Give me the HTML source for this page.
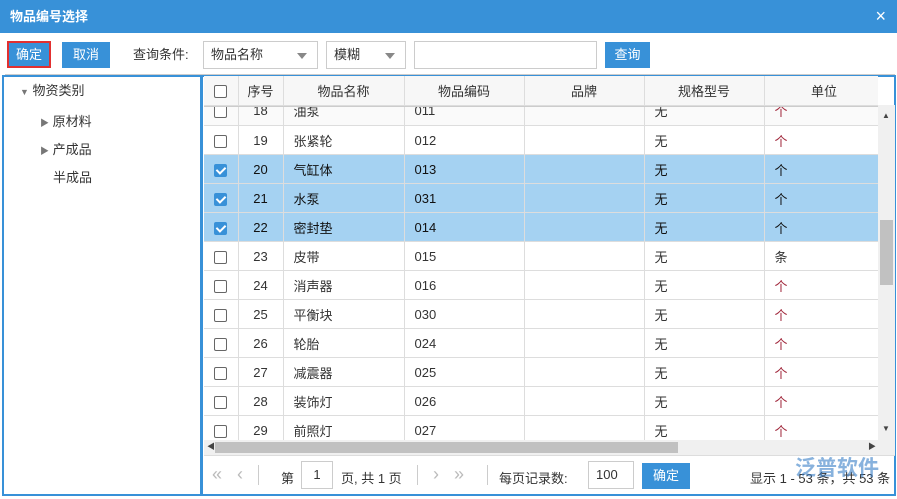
<!DOCTYPE html><html><head><meta charset="utf-8"><style>
*{box-sizing:border-box;margin:0;padding:0}
body{width:897px;height:499px;overflow:hidden;background:#fff;font-family:"Liberation Sans","Noto Sans CJK SC",sans-serif;font-size:13px;color:#333;position:relative}
.abs{position:absolute}
.title{left:0;top:0;width:897px;height:33px;background:#3891d8;color:#fff;font-weight:bold;font-size:13px;line-height:33px;padding-left:10px}
.btn{background:#3891d8;color:#fff;text-align:center;line-height:26px;height:26px}
.sel{border:1px solid #ccc;height:28px;line-height:26px;padding-left:7px;background:#fff}
.tri{position:absolute;right:10px;top:11px;border-left:5px solid transparent;border-right:5px solid transparent;border-top:6px solid #888}
table{border-collapse:collapse;table-layout:fixed}
td{height:29px;border-right:1px solid #ddd;border-bottom:1px solid #ddd;white-space:nowrap;overflow:hidden;padding-left:10px}
.cb{width:13px;height:13px;border:1px solid #666;border-radius:2px;display:inline-block;vertical-align:middle;background:#fff}
.ck{background:#3891d8;border-color:#3891d8;position:relative}
.ck:after{content:"";position:absolute;left:3px;top:0px;width:4px;height:7px;border:solid #fff;border-width:0 2px 2px 0;transform:rotate(45deg)}
tr.s td{background:#a5d2f2;color:#111}
.u{color:#a0263a}
</style></head><body>
<div class="abs title">物品编号选择</div>
<div class="abs" style="right:11px;top:7px;color:#fff;font-size:18px;line-height:18px">×</div>
<div class="abs btn" style="left:7px;top:41px;width:44px;height:27px;border:2px solid #e23030;line-height:23px">确定</div>
<div class="abs btn" style="left:62px;top:42px;width:48px">取消</div>
<div class="abs" style="left:133px;top:42px;line-height:26px">查询条件:</div>
<div class="abs sel" style="left:203px;top:41px;width:115px">物品名称<span class="tri"></span></div>
<div class="abs sel" style="left:326px;top:41px;width:80px">模糊<span class="tri"></span></div>
<div class="abs sel" style="left:414px;top:41px;width:183px"></div>
<div class="abs btn" style="left:605px;top:42px;width:45px">查询</div>
<div class="abs" style="left:5px;top:74px;width:890px;height:1px;background:#ccc"></div>
<div class="abs" style="left:2px;top:75px;width:201px;height:421px;border:2px solid #3891d8;border-right-width:3px"></div>
<div class="abs" style="left:20px;top:83px;line-height:16px"><span style="font-size:9px;color:#777">▼</span> 物资类别</div>
<div class="abs" style="left:40px;top:111px"><span style="font-size:9px;color:#777">▶</span> 原材料</div>
<div class="abs" style="left:40px;top:139px"><span style="font-size:9px;color:#777">▶</span> 产成品</div>
<div class="abs" style="left:53px;top:167px">半成品</div>
<div class="abs" style="left:203px;top:75px;width:693px;height:421px;border:2px solid #3891d8;border-left:none"></div>
<div class="abs" style="left:204px;top:76px;width:674px;height:364px;overflow:hidden">
<table style="width:680px;background:#f7f7f7"><colgroup><col style="width:34px"><col style="width:45px"><col style="width:121px"><col style="width:120px"><col style="width:120px"><col style="width:120px"><col style="width:120px"></colgroup>
<tr><td style="height:29px;padding-left:10px"><span class="cb"></span></td><td style="text-align:center;padding:0">序号</td><td style="text-align:center;padding:0">物品名称</td><td style="text-align:center;padding:0">物品编码</td><td style="text-align:center;padding:0">品牌</td><td style="text-align:center;padding:0">规格型号</td><td style="text-align:center;padding:0">单位</td></tr></table>
<div style="height:335px;overflow:hidden;position:relative;border-top:1px solid #ccc">
<table style="width:680px;margin-top:-10px">
<colgroup><col style="width:34px"><col style="width:45px"><col style="width:121px"><col style="width:120px"><col style="width:120px"><col style="width:120px"><col style="width:120px"></colgroup>
<tr style="background:#fafafa"><td><span class="cb"></span></td><td style="text-align:center;padding:0">18</td><td>油泵</td><td>011</td><td></td><td>无</td><td class="u">个</td></tr>
<tr><td><span class="cb"></span></td><td style="text-align:center;padding:0">19</td><td>张紧轮</td><td>012</td><td></td><td>无</td><td class="u">个</td></tr>
<tr class="s"><td><span class="cb ck"></span></td><td style="text-align:center;padding:0">20</td><td>气缸体</td><td>013</td><td></td><td>无</td><td>个</td></tr>
<tr class="s"><td><span class="cb ck"></span></td><td style="text-align:center;padding:0">21</td><td>水泵</td><td>031</td><td></td><td>无</td><td>个</td></tr>
<tr class="s"><td><span class="cb ck"></span></td><td style="text-align:center;padding:0">22</td><td>密封垫</td><td>014</td><td></td><td>无</td><td>个</td></tr>
<tr><td><span class="cb"></span></td><td style="text-align:center;padding:0">23</td><td>皮带</td><td>015</td><td></td><td>无</td><td>条</td></tr>
<tr><td><span class="cb"></span></td><td style="text-align:center;padding:0">24</td><td>消声器</td><td>016</td><td></td><td>无</td><td class="u">个</td></tr>
<tr><td><span class="cb"></span></td><td style="text-align:center;padding:0">25</td><td>平衡块</td><td>030</td><td></td><td>无</td><td class="u">个</td></tr>
<tr><td><span class="cb"></span></td><td style="text-align:center;padding:0">26</td><td>轮胎</td><td>024</td><td></td><td>无</td><td class="u">个</td></tr>
<tr><td><span class="cb"></span></td><td style="text-align:center;padding:0">27</td><td>减震器</td><td>025</td><td></td><td>无</td><td class="u">个</td></tr>
<tr><td><span class="cb"></span></td><td style="text-align:center;padding:0">28</td><td>装饰灯</td><td>026</td><td></td><td>无</td><td class="u">个</td></tr>
<tr><td><span class="cb"></span></td><td style="text-align:center;padding:0">29</td><td>前照灯</td><td>027</td><td></td><td>无</td><td class="u">个</td></tr>
</table></div></div>
<div class="abs" style="left:878px;top:105px;width:17px;height:335px;background:#f0f0f0"></div>
<div class="abs" style="left:880px;top:220px;width:13px;height:65px;background:#c1c1c1"></div>
<div class="abs" style="left:882px;top:111px;font-size:8px;color:#444">▲</div>
<div class="abs" style="left:882px;top:424px;font-size:8px;color:#444">▼</div>
<div class="abs" style="left:204px;top:440px;width:691px;height:15px;background:#f0f0f0"></div>
<div class="abs" style="left:215px;top:442px;width:463px;height:11px;background:#c1c1c1"></div>
<div class="abs" style="left:207px;top:441px;font-size:8px;color:#444">◀</div>
<div class="abs" style="left:868px;top:441px;font-size:8px;color:#444">▶</div>
<div class="abs" style="left:204px;top:455px;width:691px;height:1px;background:#ddd"></div>
<div class="abs" style="left:212px;top:462px;color:#bbb;font-size:18px;line-height:24px">«&nbsp;&nbsp;&nbsp;‹</div>
<div class="abs" style="left:258px;top:465px;width:1px;height:20px;background:#ccc"></div>
<div class="abs" style="left:281px;top:468px">第</div>
<div class="abs sel" style="left:301px;top:461px;width:32px;text-align:center;padding:0">1</div>
<div class="abs" style="left:341px;top:468px">页, 共 1 页</div>
<div class="abs" style="left:417px;top:465px;width:1px;height:20px;background:#ccc"></div>
<div class="abs" style="left:433px;top:462px;color:#bbb;font-size:18px;line-height:24px">›&nbsp;&nbsp;&nbsp;»</div>
<div class="abs" style="left:487px;top:465px;width:1px;height:20px;background:#ccc"></div>
<div class="abs" style="left:499px;top:468px">每页记录数:</div>
<div class="abs sel" style="left:588px;top:461px;width:46px">100</div>
<div class="abs btn" style="left:642px;top:463px;width:48px">确定</div>
<div class="abs" style="left:750px;top:468px">显示 1 - 53 条，共 53 条</div>
<div class="abs" style="left:795px;top:452px;color:#3a7fc8;font-size:21px;font-weight:bold;opacity:.6">泛普软件</div>
</body></html>
